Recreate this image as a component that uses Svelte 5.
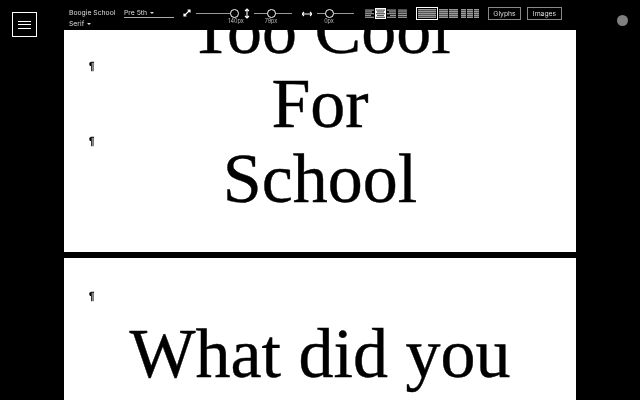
<script lang="ts">
  let fontName = 'Boogie School';
  let weight = 'Pre 5th';
  let style = 'Serif';

  const alignments = [
    { id: 'left', active: false, lines: [[0, 9], [0, 7], [0, 9], [0, 6], [0, 9]] },
    { id: 'center', active: true, lines: [[0, 9], [1, 7], [0, 9], [1, 7], [0, 9]] },
    { id: 'right', active: false, lines: [[0, 9], [2, 7], [0, 9], [3, 6], [0, 9]] },
    { id: 'justify', active: false, lines: [[0, 9], [0, 9], [0, 9], [0, 9], [0, 9]] }
  ];
</script>

<div class="page">
  <header class="toolbar">
    <button class="menu" aria-label="Menu">
      <span></span>
      <span></span>
      <span></span>
    </button>

    <div class="font-picker">
      <div class="row">
        <span class="name">{fontName}</span>
        <span class="select">{weight} <i class="caret"></i></span>
      </div>
      <div class="row second-row">
        <span>{style} <i class="caret"></i></span>
      </div>
    </div>

    <svg class="icon size" width="10" height="10" viewBox="0 0 10 10">
      <path d="M2 8L8 2M5.5 2h2.5v2.5M2 5.5V8h2.5" fill="none" stroke="#fff" stroke-width="1.2" />
    </svg>
    <div class="slider size-slider">
      <div class="track"><i class="knob" style="left: 38px"></i></div>
      <span class="value" style="left: 40px">140px</span>
    </div>

    <svg class="icon leading" width="6" height="11" viewBox="0 0 6 11">
      <path d="M3 1v9M1 3l2-2 2 2M1 8l2 2 2-2" fill="none" stroke="#fff" stroke-width="1.1" />
    </svg>
    <div class="slider leading-slider">
      <div class="track"><i class="knob" style="left: 17px"></i></div>
      <span class="value" style="left: 17px">79px</span>
    </div>

    <svg class="icon tracking" width="10" height="6" viewBox="0 0 10 6">
      <path d="M0 3h10M2 1L0 3l2 2M8 1l2 2-2 2" fill="none" stroke="#fff" stroke-width="1.1" />
    </svg>
    <div class="slider tracking-slider">
      <div class="track"><i class="knob" style="left: 12px"></i></div>
      <span class="value" style="left: 12px">0px</span>
    </div>

    <div class="aligns">
      {#each alignments as a}
        <svg class="align" class:active={a.active} width="11" height="11" viewBox="0 0 11 11">
          {#each a.lines as l, i}
            <rect x={1 + l[0]} y={1.5 + i * 1.8} width={l[1]} height="1.2" />
          {/each}
        </svg>
      {/each}
    </div>

    <div class="layouts">
      <div class="layout selected"><i></i></div>
      <div class="layout two"><i></i><i></i></div>
      <div class="layout three"><i></i><i></i><i></i></div>
    </div>

    <button class="pill glyphs">Glyphs</button>
    <button class="pill images">Images</button>
  </header>

  <i class="dot"></i>

  <main class="sheets">
    <section class="sheet first">
      <p>Too Cool</p>
      <p>For</p>
      <p class="last">School</p>
      <span class="pilcrow" style="top: 61px">¶</span>
      <span class="pilcrow" style="top: 136px">¶</span>
    </section>
    <section class="sheet second">
      <p>What did you</p>
      <span class="pilcrow" style="top: 33px">¶</span>
    </section>
  </main>
</div>

<style>
  :global(body) {
    margin: 0;
    background: #000;
  }

  .page {
    position: relative;
    width: 640px;
    height: 400px;
    overflow: hidden;
    background: #000;
    font-family: "Inter", "Liberation Sans", sans-serif;
  }

  .toolbar {
    position: relative;
    z-index: 2;
    display: flex;
    align-items: flex-start;
    height: 30px;
    background: #000;
    color: #ddd;
    font-size: 7px;
    will-change: transform;
  }

  .menu {
    flex: none;
    display: flex;
    flex-direction: column;
    justify-content: center;
    gap: 2.5px;
    width: 25px;
    height: 25px;
    margin: 12px 32px 0 12px;
    padding: 0 5px;
    background: #000;
    border: 1.5px solid #fff;
    box-sizing: border-box;
  }

  .menu span {
    display: block;
    height: 1px;
    background: #fff;
  }

  .font-picker {
    flex: none;
    width: 105px;
    margin-top: 8px;
    line-height: 10px;
    font-size: 6.8px;
  }

  .row {
    display: flex;
    height: 10px;
  }

  .second-row {
    margin-top: 0.5px;
  }

  .name {
    width: 55px;
  }

  .select {
    width: 50px;
    height: 9px;
    border-bottom: 1px solid #aaa;
  }

  .caret {
    display: inline-block;
    margin-left: 1px;
    vertical-align: middle;
    border-left: 2px solid transparent;
    border-right: 2px solid transparent;
    border-top: 2px solid #ddd;
  }

  .icon {
    flex: none;
  }

  .icon.size {
    margin: 8px 4px 0 8px;
  }

  .icon.leading {
    margin: 8px 4px 0 6px;
  }

  .icon.tracking {
    margin: 11px 5px 0 10px;
  }

  .slider {
    position: relative;
    flex: none;
    height: 30px;
  }

  .size-slider {
    width: 42px;
  }

  .leading-slider {
    width: 38px;
  }

  .tracking-slider {
    width: 37px;
  }

  .track {
    position: relative;
    height: 1px;
    margin-top: 13px;
    background: #999;
  }

  .knob {
    position: absolute;
    top: -4px;
    width: 9px;
    height: 9px;
    margin-left: -4.5px;
    box-sizing: border-box;
    background: #000;
    border: 1.2px solid #fff;
    border-radius: 50%;
  }

  .value {
    position: absolute;
    top: 18px;
    transform: translateX(-50%);
    font-size: 5.5px;
    line-height: 7px;
    color: #bbb;
    white-space: nowrap;
  }

  .aligns {
    flex: none;
    display: flex;
    margin: 8px 0 0 10px;
  }

  .align {
    display: block;
    fill: #999;
  }

  .align.active {
    background: #fff;
    fill: #555;
  }

  .layouts {
    flex: none;
    display: flex;
    margin: 7px 0 0 8px;
  }

  .layout {
    display: flex;
    gap: 1px;
    box-sizing: border-box;
    height: 13px;
    padding: 2px 0;
  }

  .layout i {
    flex: 1;
    background: repeating-linear-gradient(#999 0 1px, #555 1px 2px);
  }

  .layout.selected {
    width: 22px;
    padding: 1px;
    border: 1px solid #fff;
  }

  .layout.two {
    width: 19px;
    margin: 0 3px 0 1px;
  }

  .layout.three {
    width: 18px;
  }

  .pill {
    flex: none;
    height: 13px;
    margin-top: 7px;
    padding: 0;
    background: #000;
    border: 1px solid #888;
    color: #ddd;
    font: 6.8px "Inter", "Liberation Sans", sans-serif;
    line-height: 11px;
    text-align: center;
  }

  .glyphs {
    width: 33px;
    margin-left: 9px;
    margin-right: 6px;
  }

  .images {
    width: 35px;
  }

  .dot {
    position: absolute;
    z-index: 3;
    left: 617px;
    top: 15px;
    width: 11px;
    height: 11px;
    border-radius: 50%;
    background: #808080;
  }

  .sheets {
    display: flex;
    flex-direction: column;
    gap: 6px;
    width: 512px;
    margin: -30px auto 0;
  }

  .sheet {
    position: relative;
    background: #fff;
    color: #000;
    font-family: "Liberation Serif", serif;
    font-size: 70px;
    line-height: 74px;
    text-align: center;
    -webkit-text-stroke: 0.4px #000;
    will-change: transform;
  }

  .sheet.first {
    height: 252px;
    box-sizing: border-box;
  }

  .sheet.first p:first-child {
    margin-top: -7px;
  }

  .sheet.first p.last {
    margin-top: 1px;
  }

  .sheet.second {
    height: 400px;
    padding-top: 59px;
    box-sizing: border-box;
  }

  p {
    margin: 0;
    white-space: nowrap;
  }

  .pilcrow {
    position: absolute;
    left: 25px;
    font: 10px/12px "Liberation Sans", sans-serif;
    -webkit-text-stroke: 0.3px #000;
  }
</style>
